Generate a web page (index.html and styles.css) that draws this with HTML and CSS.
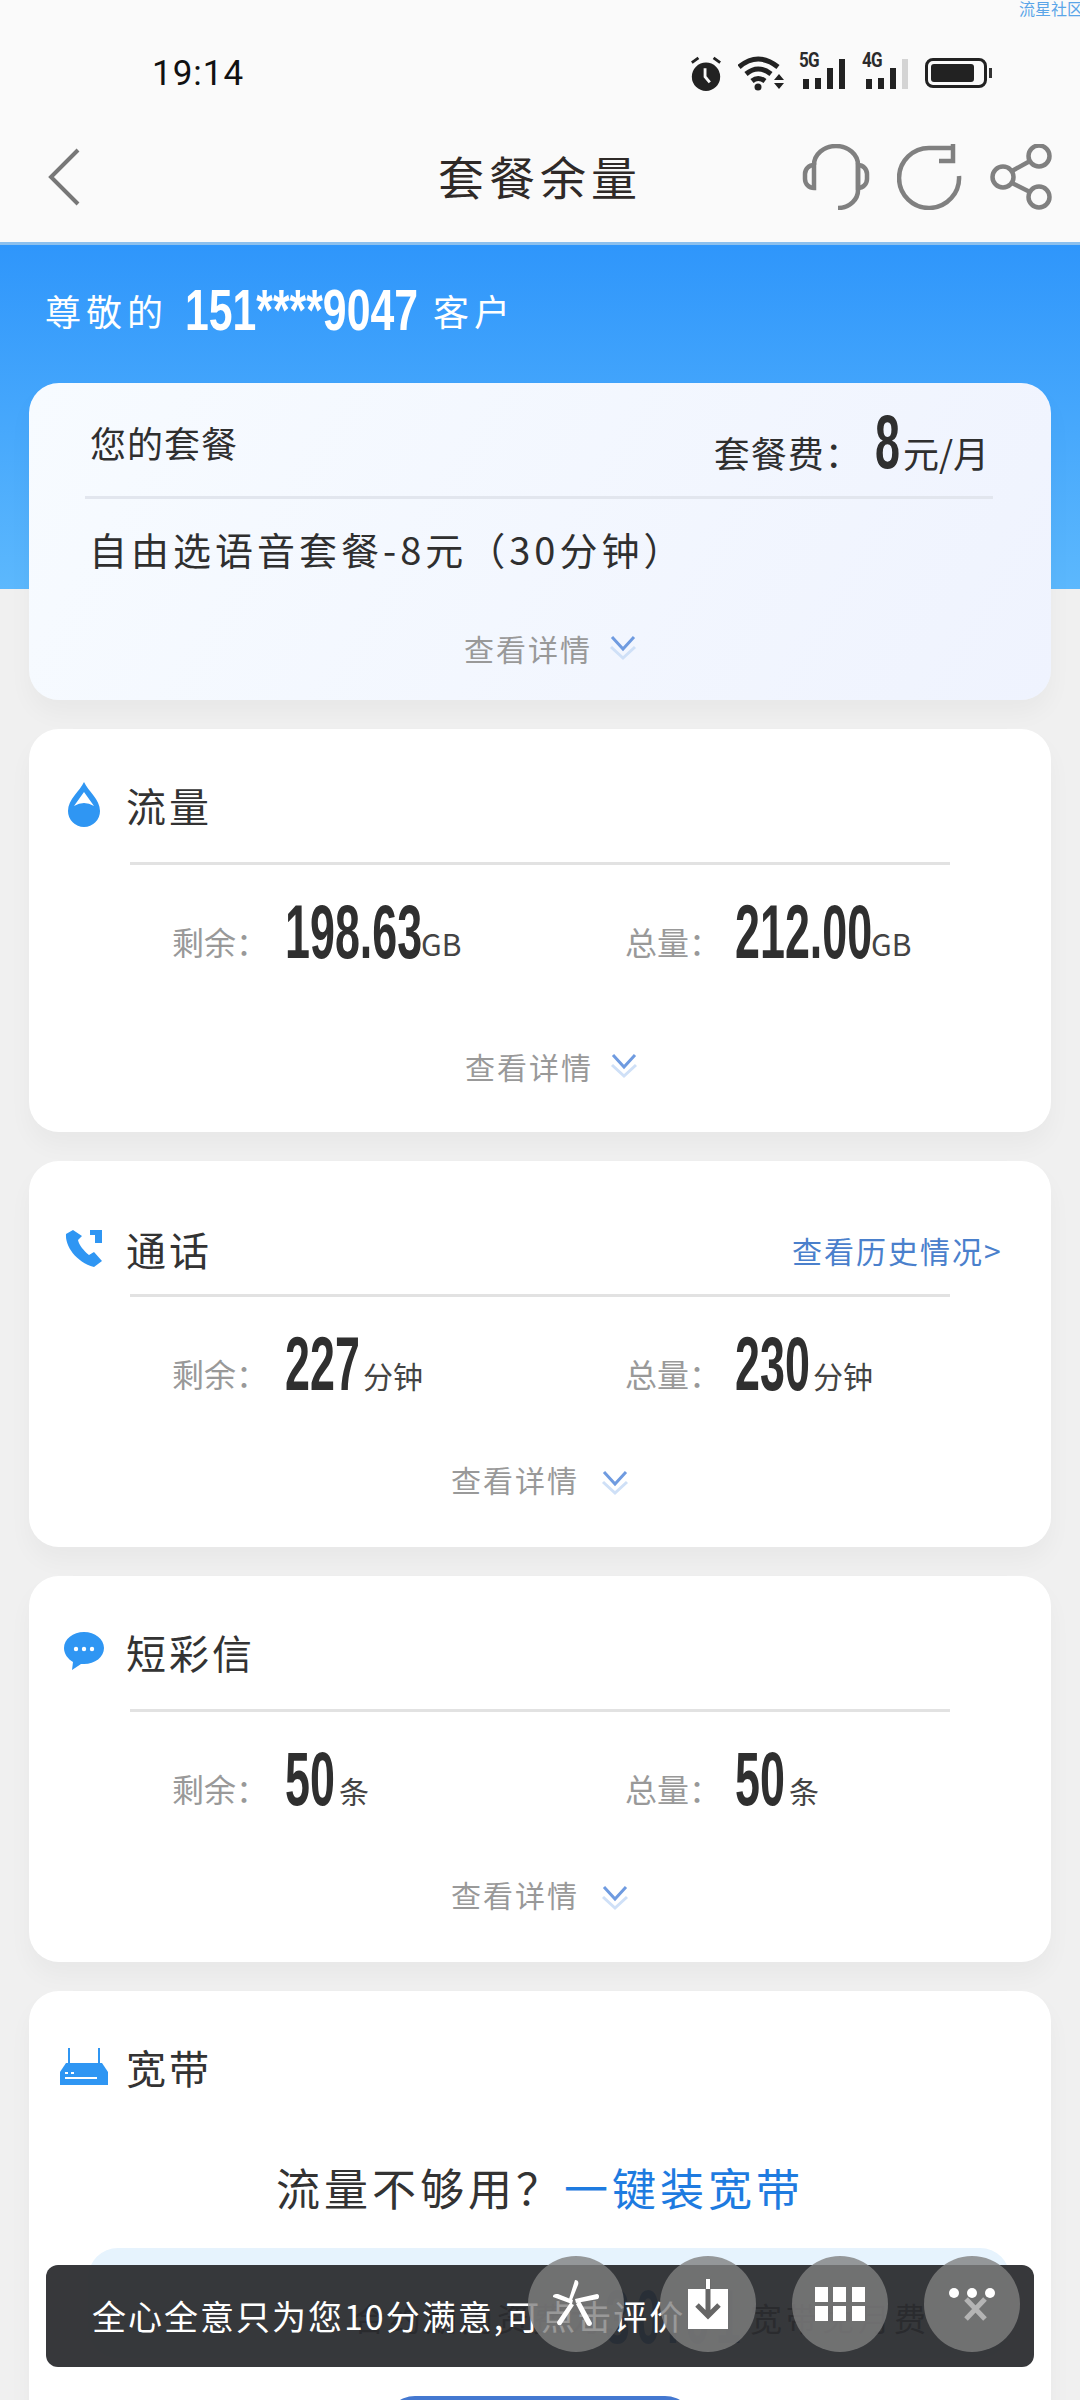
FILE: index.html
```html
<!DOCTYPE html>
<html lang="zh-CN">
<head>
<meta charset="utf-8">
<title>套餐余量</title>
<link rel="stylesheet" href="styles.css">
</head>
<body>
<div class="page">

<svg width="0" height="0" class="defs">
  <symbol id="chev" viewBox="0 0 28 28">
    <path d="M2 13l12 11 12-11" fill="none" stroke="#cfe0f7" stroke-width="3"/>
    <path d="M3 3l11 12 11-12" fill="none" stroke="#6f9be0" stroke-width="3"/>
  </symbol>
</svg>

<div class="top">
  <div class="watermark">流星社区</div>
  <div class="status">
    <span class="time">19:14</span>
    <div class="status-icons">
      <svg width="34" height="36" viewBox="0 0 36 38"><circle cx="18" cy="23" r="15" fill="#222"/><path d="M17 14v9l5 6" fill="none" stroke="#fafafa" stroke-width="3"/><path d="M3 8l7-5M33 8l-7-5" stroke="#222" stroke-width="3"/></svg>
      <svg width="46" height="36" viewBox="0 0 46 36"><path d="M1 12Q20-4 40 12" fill="none" stroke="#222" stroke-width="5"/><path d="M8 19Q20 9 33 19" fill="none" stroke="#222" stroke-width="5"/><path d="M14 26Q20 21 27 26" fill="none" stroke="#222" stroke-width="5"/><circle cx="20" cy="32" r="3.5" fill="#222"/><path d="M36 25l5-6 5 6zM36 28l5 6 5-6z" fill="#222"/></svg>
      <div class="signal"><b>5G</b><i class="b1"></i><i class="b2"></i><i class="b3"></i><i class="b4"></i></div>
      <div class="signal"><b>4G</b><i class="b1"></i><i class="b2"></i><i class="b3"></i><i class="b4 off"></i></div>
      <div class="battery"><span></span></div>
    </div>
  </div>
  <div class="nav">
    <svg class="back" width="40" height="60" viewBox="0 0 40 60"><path d="M33 3L6 30l27 27" fill="none" stroke="#777" stroke-width="4"/></svg>
    <div class="nav-title">套餐余量</div>
    <div class="nav-icons">
      <svg width="68" height="66" viewBox="0 0 68 66"><path d="M12 21a22 19 0 0 1 44 0v24a20 18 0 0 1-20 19" fill="none" stroke="#808080" stroke-width="4.5"/><path d="M12 21a9 9 0 0 0-9 9v5a9 9 0 0 0 9 9zM56 21a9 9 0 0 1 9 9v5a9 9 0 0 1-9 9z" fill="none" stroke="#808080" stroke-width="4.5"/></svg>
      <svg width="66" height="66" viewBox="0 0 66 66"><path d="M62 32A30 30 0 1 1 33 4h22" fill="none" stroke="#808080" stroke-width="4.5"/><path d="M56 0v17H42" fill="none" stroke="#808080" stroke-width="4.5"/></svg>
      <svg width="62" height="66" viewBox="0 0 62 66"><circle cx="13" cy="33" r="10.5" fill="none" stroke="#808080" stroke-width="4.5"/><circle cx="49" cy="12" r="10.5" fill="none" stroke="#808080" stroke-width="4.5"/><circle cx="49" cy="53" r="10.5" fill="none" stroke="#808080" stroke-width="4.5"/><path d="M22 27l18-10M22 39l18 9" stroke="#808080" stroke-width="4.5"/></svg>
    </div>
  </div>
</div>

<div class="content">
  <div class="greet">尊敬的<span class="num phone">151****9047</span>客户</div>

  <div class="card plan">
    <div class="plan-head">
      <span class="plan-label">您的套餐</span>
      <span class="fee"><span class="fee-text">套餐费：</span><span class="num w1">8</span><span class="fee-text fee-unit">元/月</span></span>
    </div>
    <div class="plan-name">自由选语音套餐-8元（30分钟）</div>
    <div class="details">查看详情<svg width="28" height="28"><use href="#chev"/></svg></div>
  </div>

  <div class="card usage">
    <div class="card-head">
      <svg class="ico ico-drop" width="34" height="46" viewBox="0 0 34 46"><path d="M17 0C13 9 1 17 1 29a16 16 0 0 0 32 0C33 17 21 9 17 0z" fill="#2f96f3"/><path d="M17 10L7 24q5-3 10-3t10 3z" fill="#fff"/></svg>
      <span class="card-title">流量</span>
    </div>
    <div class="stats">
      <div class="stat"><span class="lab">剩余：</span><span class="num w6">198.63</span><span class="unit">GB</span></div>
      <div class="stat"><span class="lab">总量：</span><span class="num w6">212.00</span><span class="unit">GB</span></div>
    </div>
    <div class="details">查看详情<svg width="28" height="28"><use href="#chev"/></svg></div>
  </div>

  <div class="card usage usage-short">
    <div class="card-head head-low">
      <svg class="ico ico-phone" width="38" height="37" viewBox="0 0 38 37"><path d="M8 0L1 4c-1 12 10 28 28 33l8-6-8-9-5 3C19 21 14 15 13 10l4-4z" fill="#2f96f3"/><path d="M25 0h12v13h-7V5h-5z" fill="#2f96f3"/></svg>
      <span class="card-title">通话</span>
      <span class="history">查看历史情况&gt;</span>
    </div>
    <div class="stats">
      <div class="stat"><span class="lab">剩余：</span><span class="num w3">227</span><span class="unit">分钟</span></div>
      <div class="stat"><span class="lab">总量：</span><span class="num w3">230</span><span class="unit">分钟</span></div>
    </div>
    <div class="details details-wide">查看详情<svg width="28" height="28"><use href="#chev"/></svg></div>
  </div>

  <div class="card usage usage-short">
    <div class="card-head">
      <svg class="ico ico-msg" width="40" height="38" viewBox="0 0 40 38"><path d="M20 0C9 0 0 7 0 16c0 6 4 11 9 14l-1 8 9-6h3c11 0 20-7 20-16S31 0 20 0z" fill="#2f96f3"/><circle cx="12" cy="17" r="2.2" fill="#fff"/><circle cx="20" cy="17" r="2.2" fill="#fff"/><circle cx="28" cy="17" r="2.2" fill="#fff"/></svg>
      <span class="card-title">短彩信</span>
    </div>
    <div class="stats">
      <div class="stat"><span class="lab">剩余：</span><span class="num w2">50</span><span class="unit">条</span></div>
      <div class="stat"><span class="lab">总量：</span><span class="num w2">50</span><span class="unit">条</span></div>
    </div>
    <div class="details details-wide">查看详情<svg width="28" height="28"><use href="#chev"/></svg></div>
  </div>

  <div class="card broadband">
    <div class="card-head head-plain">
      <svg class="ico ico-router" width="48" height="37" viewBox="0 0 48 37"><path d="M8 0h2v17H8zM38 0h2v17h-2z" fill="#2f96f3"/><path d="M6 15h36l6 9v13H0V24z" fill="#2f96f3"/><path d="M5 25h3M11 25h3M5 30h32" stroke="#fff" stroke-width="2"/></svg>
      <span class="card-title">宽带</span>
    </div>
    <div class="promo">流量不够用？<span class="promo-link">一键装宽带</span></div>
    <div class="panel">
      <span class="panel-text">合约期内资费为</span><span class="num panel-num">30.01</span><span class="panel-text">宽带免月费</span>
    </div>
    <div class="cta"></div>
  </div>
</div>

<div class="toast">全心全意只为您10分满意,可点击评价</div>

<div class="float f1"><svg width="60" height="60" viewBox="-30 -30 60 60"><path d="M-1-24c3 0 4 2 3 5l-6 15-3-1zM-23-7c0-3 2-3 5-3l15 6-1 4zM-1-5l22-5c2 0 3 3 1 5L0-1zM0 0l4-3 12 22c0 3-3 4-5 2zM-6-1l4 2-13 20c-3 1-4-1-4-3z" fill="#fff"/></svg></div>
<div class="float f2"><svg width="40" height="50" viewBox="0 0 40 50"><path d="M0 10h40v40H0z" fill="#fff"/><path d="M20 0v36M9 26l11 11 11-11" fill="none" stroke="#666" stroke-width="5"/><path d="M18 0h4v10h-4z" fill="#fff"/></svg></div>
<div class="float f3"><svg width="50" height="34" viewBox="0 0 50 34"><path d="M0 0h13v15H0zM18 0h13v15H18zM37 0h13v15H37zM0 19h13v15H0zM18 19h13v15H18zM37 19h13v15H37z" fill="#fff"/></svg></div>
<div class="float f4"><svg width="50" height="46" viewBox="0 0 50 46"><path d="M19 18l19 20M38 18L19 38" stroke="#b4b4b4" stroke-width="5"/><circle cx="7" cy="12" r="5" fill="#fff"/><circle cx="25" cy="12" r="5" fill="#fff"/><circle cx="43" cy="12" r="5" fill="#fff"/></svg></div>

</div>
</body>
</html>
```

FILE: styles.css
```css
* {box-sizing: border-box;}
html, body {margin: 0; padding: 0;}
body {width: 1080px; height: 2400px; overflow: hidden; background: #f0f0f0; font-family: "Noto Sans CJK SC", "Noto Sans", sans-serif; color: #2b2b2b;}
.page {position: relative; width: 1080px; height: 2400px; overflow: hidden;}
.defs {position: absolute;}

/* top bar */
.top {height: 245px; background: #fafafa; border-bottom: 3px solid #8cc0ee;}
.watermark {height: 16px; text-align: right; font-size: 16px; line-height: 16px; color: #5aa5e8; margin-right: -3px; white-space: nowrap;}
.status {display: flex; justify-content: space-between; align-items: center; height: 86px; padding: 28px 93px 0 152px;}
.time {font-family: Roboto, sans-serif; font-size: 35px; color: #111; letter-spacing: 1px;}
.status-icons {display: flex; align-items: center; gap: 15px;}
.signal {position: relative; width: 48px; height: 32px; display: flex; align-items: flex-end; gap: 6px; padding-left: 4px;}
.signal b {position: absolute; left: 0; top: -7px; font-family: Roboto, sans-serif; font-size: 20px; line-height: 20px; letter-spacing: -1px; transform: scaleX(.85); transform-origin: left;}
.signal i {width: 6px; background: #222;}
.signal .b1 {height: 10px;}
.signal .b2 {height: 11px;}
.signal .b3 {height: 21px;}
.signal .b4 {height: 30px;}
.signal .off {background: #d4d4d4;}
.battery {position: relative; width: 62px; height: 30px; border: 3px solid #222; border-radius: 8px; padding: 3px;}
.battery span {display: block; width: 43px; height: 18px; background: #222; border-radius: 3px;}
.battery:after {content: ""; position: absolute; right: -8px; top: 7px; width: 3px; height: 10px; background: #333;}
.nav {position: relative; display: flex; align-items: center; justify-content: space-between; height: 140px; padding: 10px 28px 0 45px;}
.nav-title {position: absolute; left: 0; right: 0; margin-top: -4px; text-align: center; font-size: 46px; letter-spacing: 5px; line-height: 60px; color: #2f2a28;}
.nav-icons {display: flex; gap: 27px;}

/* blue band and cards */
.content {padding: 0 29px; background: linear-gradient(#2f96fb, #5cb8fd) no-repeat 0 0 / 100% 344px;}
.greet {display: flex; align-items: center; height: 138px; padding: 0 0 8px 16px; color: #fff; font-size: 36px; letter-spacing: 5px; white-space: nowrap;}
.num {display: inline-block; flex: none; font-family: "Liberation Sans", sans-serif; font-weight: bold; font-size: 76px; line-height: 76px; letter-spacing: 0; color: #2f2f2f; white-space: nowrap; transform: scaleX(.59); transform-origin: left center;}
.phone {width: 233px; margin: 0 15px 0 17px; font-size: 57px; color: #fff; transform: scaleX(.75);}
.w1 {width: 28px;}
.w2 {width: 54px;}
.w3 {width: 78px;}
.w6 {width: 136px;}
.card {background: #fff; border-radius: 30px; margin-bottom: 29px; box-shadow: 0 14px 24px rgba(0, 0, 0, .035);}

.plan {height: 317px; padding: 0 58px 0 56px; background: linear-gradient(120deg, #f7fbff, #eff3fe);}
.plan-head {display: flex; justify-content: space-between; align-items: flex-start; height: 116px; padding: 0 4px 0 5px; border-bottom: 3px solid #e2e6ee; font-size: 36px; letter-spacing: 1px; color: #2f2f2f;}
.plan-label {margin-top: 34px; line-height: 50px;}
.fee {display: flex; align-items: flex-end; margin-top: 21px;}
.fee-text {line-height: 44px; margin-bottom: 6px;}
.fee-unit {letter-spacing: 0;}
.fee .num {margin-left: 13px;}
.plan-name {margin-top: 19px; height: 62px; padding-left: 4px; font-size: 38px; line-height: 62px; letter-spacing: 4px; color: #2f2f2f; white-space: nowrap;}
.details {display: flex; justify-content: center; align-items: center; gap: 17px; padding-left: 23px; font-size: 30px; line-height: 40px; letter-spacing: 2px; color: #999;}
.plan .details {margin-top: 48px;}
.usage .details {margin-top: 76px;}
.usage .details-wide {gap: 22px; margin-top: 57px; padding-left: 0;}
.details-wide svg {margin-top: 8px;}

.usage {height: 403px;}
.usage-short {height: 386px;}
.card-head {position: relative; display: flex; align-items: flex-start; height: 136px; margin: 0 101px; padding-top: 46px; border-bottom: 3px solid #e2e2e2;}
.head-low {padding-top: 58px;}
.head-plain {height: 120px; border-bottom: 0;}
.ico {position: absolute;}
.ico-drop {left: -63px; top: 53px;}
.ico-phone {left: -65px; top: 69px;}
.ico-msg {left: -66px; top: 56px;}
.ico-router {left: -70px; top: 57px;}
.card-title {font-size: 40px; line-height: 60px; letter-spacing: 3px; margin-left: -4px; color: #333;}
.history {position: absolute; left: 662px; top: 67px; font-size: 30px; line-height: 44px; letter-spacing: 2px; color: #4a80cc; white-space: nowrap;}
.stats {display: grid; grid-template-columns: 453px 1fr; padding: 29px 0 0 143px; height: 105px;}
.stat {display: flex; align-items: flex-end;}
.lab {flex: none; width: 113px; margin-bottom: 7px; font-size: 32px; line-height: 44px; color: #999; white-space: nowrap;}
.stat + .stat .lab {width: 110px;}
.unit {margin-bottom: 5px; font-size: 30px; line-height: 44px; color: #444; white-space: nowrap;}

.broadband {height: 500px;}
.promo {margin-top: 46px; text-align: center; font-size: 44px; line-height: 60px; letter-spacing: 4px; color: #333; white-space: nowrap;}
.promo-link {color: #1e7be0;}
.panel {display: flex; align-items: center; justify-content: flex-end; height: 110px; margin: 31px 41px 0 59px; padding: 28px 80px 0 0; background: #e6f3fd; border-radius: 30px;}
.panel-text {font-size: 32px; letter-spacing: 4px; color: #222; white-space: nowrap;}
.panel-num {width: 145px; letter-spacing: 10px; color: #0b58a8;}
.cta {width: 310px; height: 60px; margin: 38px auto 0; border-radius: 30px 30px 0 0; background: #4478d0;}

/* overlays */
.toast {position: absolute; left: 46px; top: 2265px; width: 988px; height: 102px; padding-left: 46px; background: rgba(42, 44, 47, .94); border-radius: 12px; color: #fff; font-size: 34px; line-height: 102px; letter-spacing: 2px; white-space: nowrap;}
.float {position: absolute; top: 2256px; width: 96px; height: 96px; border-radius: 50%; background: rgba(128, 128, 128, .8); display: flex; align-items: center; justify-content: center;}
.f1 {left: 528px;}
.f2 {left: 660px;}
.f3 {left: 792px;}
.f4 {left: 924px;}
```
